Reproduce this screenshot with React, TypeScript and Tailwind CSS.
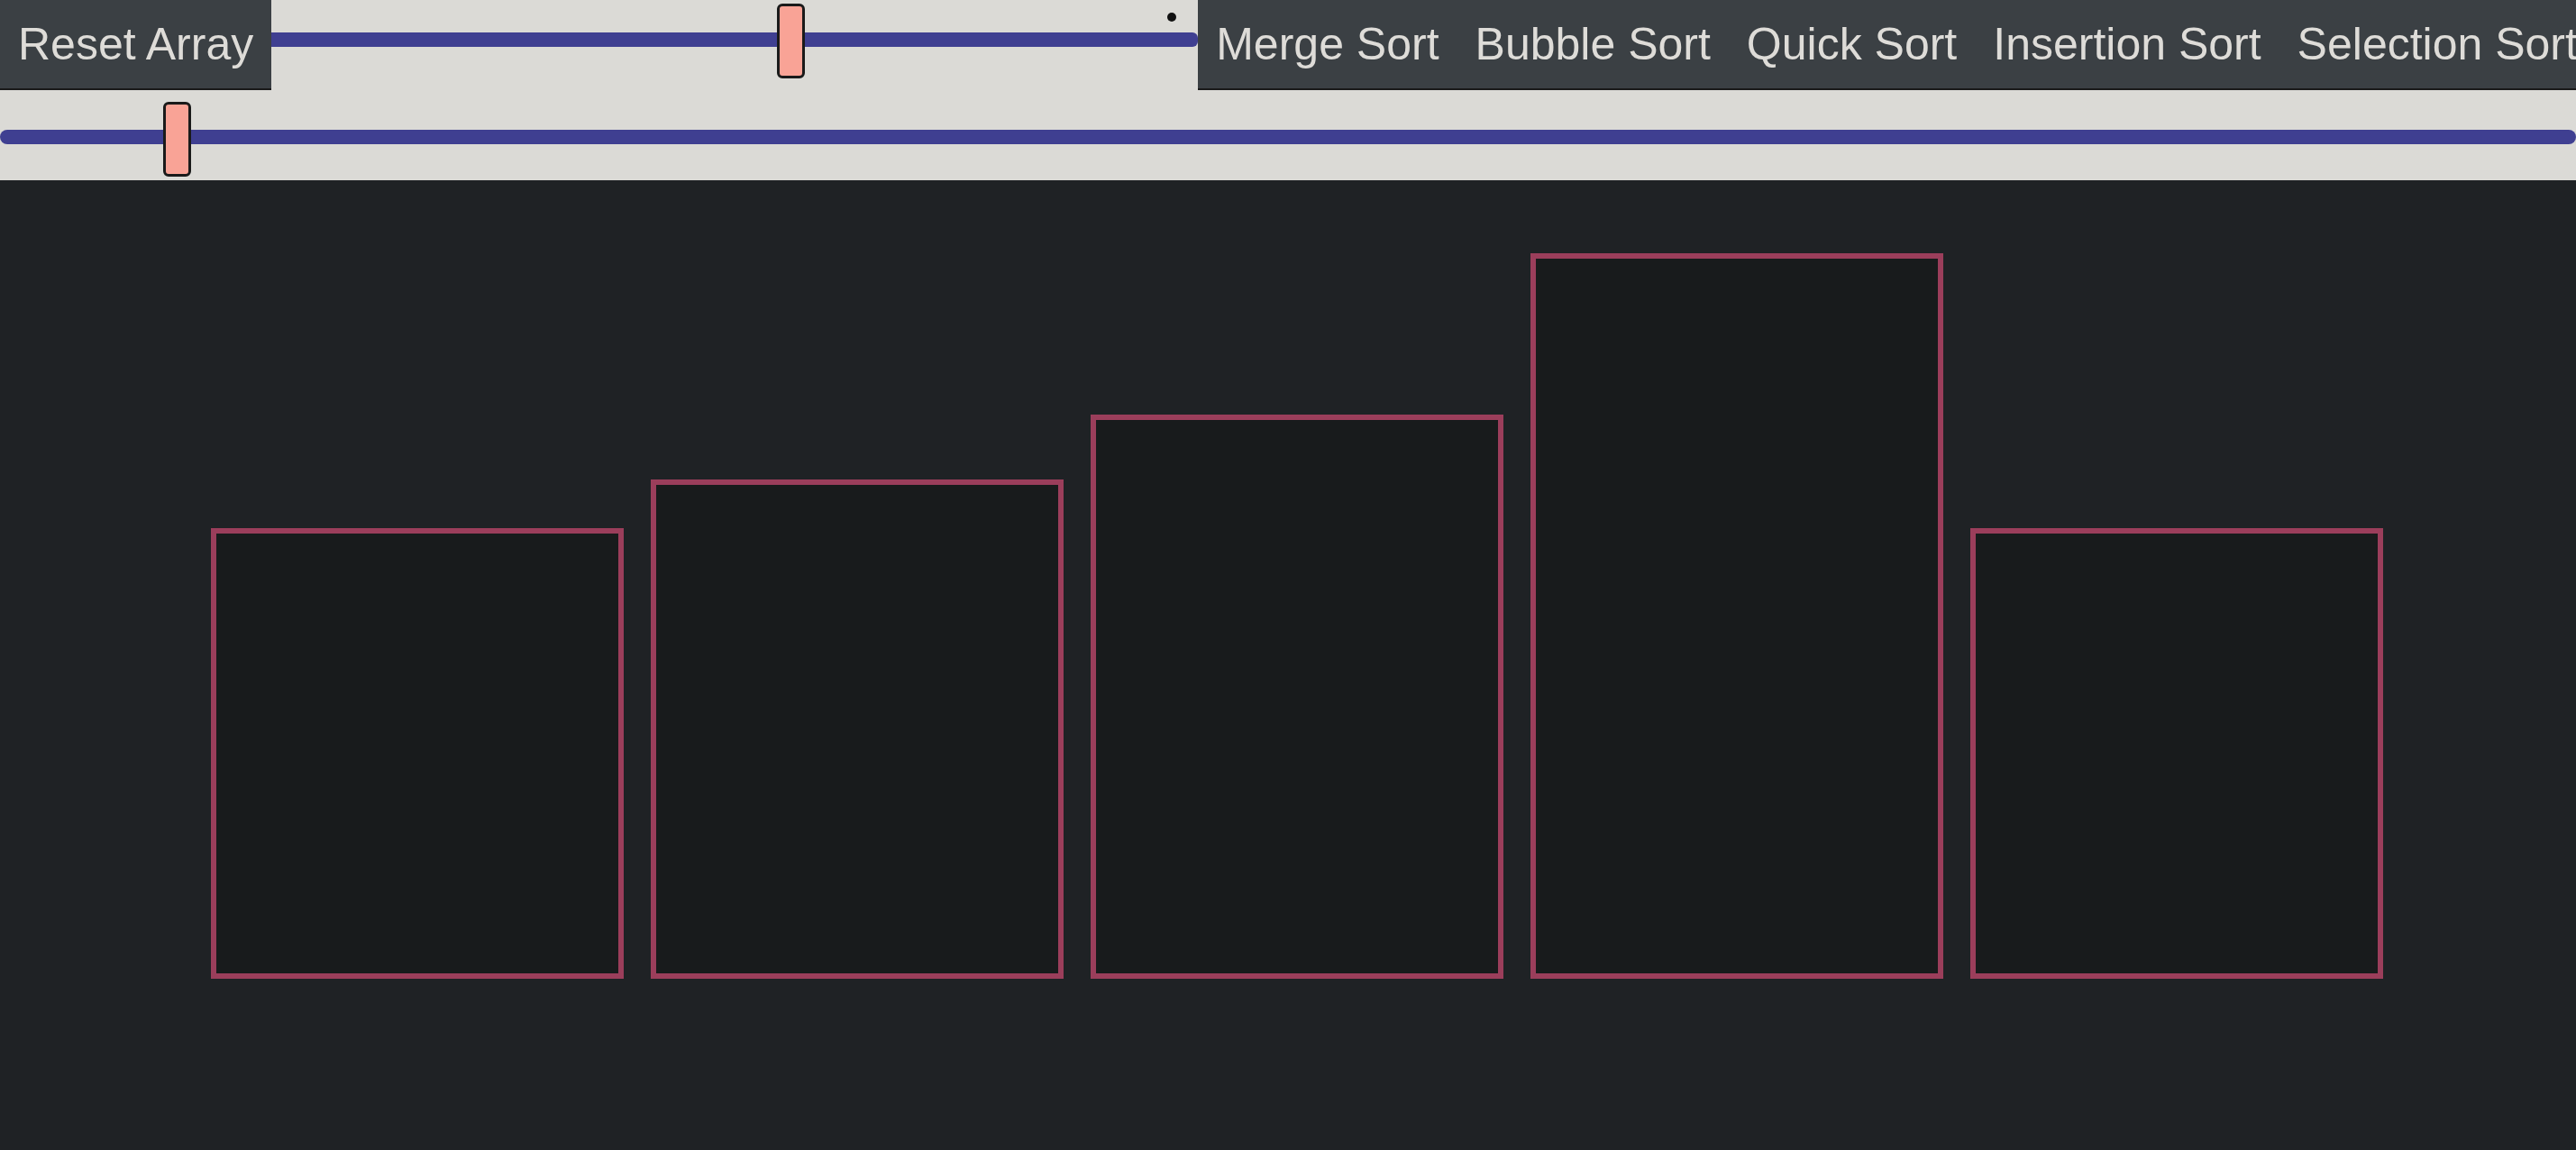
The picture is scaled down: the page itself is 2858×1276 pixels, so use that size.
const algorithms = ['Merge Sort', 'Bubble Sort', 'Quick Sort', 'Insertion Sort', 'Selection Sort'];

// bar heights in px, as laid out by the visualizer
const bars = [500, 554, 626, 805, 500];

function NavButton({ label }: { label: string }) {
  return (
    <button className="shrink-0 h-[100px] px-5 bg-[#3b4044] text-[#dedcd8] text-[50px] leading-none border-b-2 border-[#1a1a1a] whitespace-nowrap">
      {label}
    </button>
  );
}

function Thumb({ className }: { className: string }) {
  return (
    <div
      className={`absolute w-[31px] h-[83px] rounded-md border-[3px] border-[#1a1a1a] bg-[#f9a396] ${className}`}
    />
  );
}

export default function App() {
  return (
    <div className="min-h-screen bg-[#1f2225] font-['Liberation_Sans',Arial,sans-serif]">
      <div className="flex h-[100px] bg-[#dbdad6] overflow-hidden">
        <NavButton label="Reset Array" />

        <div className="relative flex items-center pb-3 shrink-0 w-[1028px]">
          <div className="w-full h-4 bg-[#3f3f91] rounded-r-md" />
          <Thumb className="left-[561px] top-[4px]" />
          <span className="absolute right-[24px] top-[14px] w-[10px] h-[10px] rounded-full bg-[#111]" />
        </div>

        <ul className="flex shrink-0">
          {algorithms.map((a) => (
            <li key={a} className="flex">
              <NavButton label={a} />
            </li>
          ))}
        </ul>
      </div>

      <div className="relative flex items-center pt-1 h-[100px] bg-[#dbdad6]">
        <div className="w-full h-4 bg-[#3f3f91] rounded-full" />
        <Thumb className="left-[181px] top-[13px]" />
      </div>

      <main className="flex items-end gap-[30px] pl-[234px] pb-[190px] h-[1076px]">
        {bars.map((h, i) => (
          <div
            key={i}
            className="shrink-0 w-[458px] border-[6px] border-[#9b3e5b] bg-[#181b1c]"
            style={{ height: h }}
          />
        ))}
      </main>
    </div>
  );
}
